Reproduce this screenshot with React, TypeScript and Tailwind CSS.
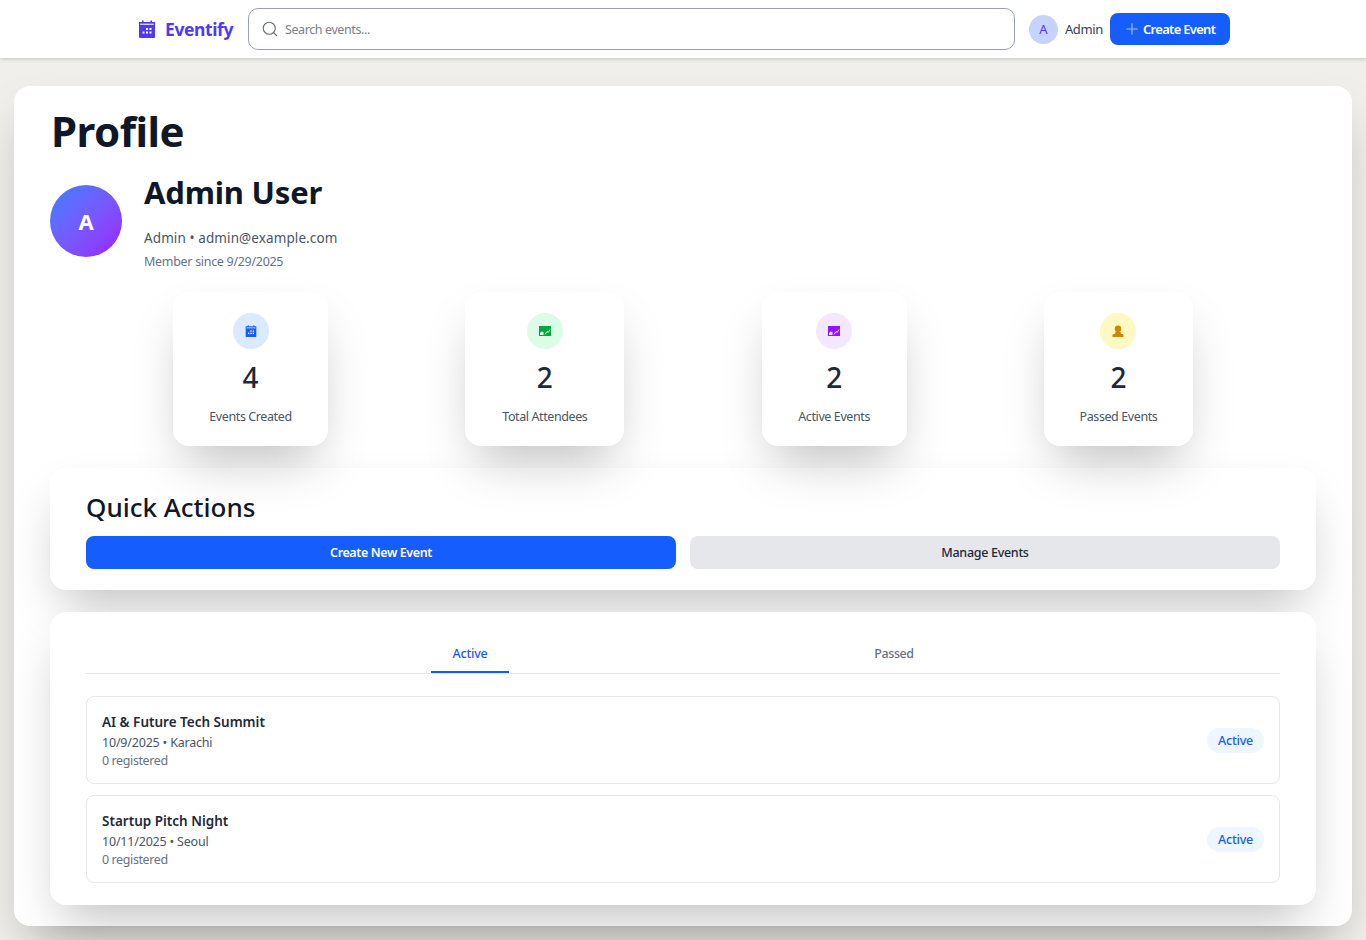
import { Plus, Search } from 'lucide-react';

type IconProps = { className?: string };

function CalendarIcon({ className }: IconProps) {
  return (
    <svg viewBox="0 0 18 18" className={className} fill="currentColor">
      <rect x="4" y="0.5" width="1.6" height="3" />
      <rect x="12.4" y="0.5" width="1.6" height="3" />
      <path d="M1 2h16v15a1 1 0 0 1-1 1H2a1 1 0 0 1-1-1z" />
      <rect x="2.2" y="3.6" width="13.6" height="1.4" fill="#fff" opacity="0.75" />
      <g fill="#fff">
        <rect x="8" y="8" width="2" height="2" />
        <rect x="11.5" y="8" width="2" height="2" />
        <rect x="4.5" y="11.5" width="2" height="2" />
        <rect x="8" y="11.5" width="2" height="2" />
        <rect x="11.5" y="11.5" width="2" height="2" />
      </g>
    </svg>
  );
}

function ChartIcon({ className }: IconProps) {
  return (
    <svg viewBox="0 0 12 10" className={className}>
      <rect width="12" height="10" fill="currentColor" />
      <path d="M1 9V7l1.5-1.5L4.5 6v3z" fill="#fff" opacity="0.9" />
      <path d="M6 8.5l2-3 1.2 1L11 3.5" fill="none" stroke="#fff" strokeWidth="0.8" />
    </svg>
  );
}

function PersonIcon({ className }: IconProps) {
  return (
    <svg viewBox="0 0 12 12" className={className} fill="currentColor">
      <circle cx="6" cy="3.7" r="3.2" />
      <path d="M3.6 6.5h4.8L9 8.8l2.5.7V12H.5V9.5L3 8.8z" />
    </svg>
  );
}

const stats = [
  { value: '4', label: 'Events Created', width: 'w-[155px]', circle: 'bg-[#dbeafe]', color: 'text-[#155dfc]', icon: 'calendar' },
  { value: '2', label: 'Total Attendees', width: 'w-[159px]', circle: 'bg-[#dcfce7]', color: 'text-[#00a63e]', icon: 'chart' },
  { value: '2', label: 'Active Events', width: 'w-[145px]', circle: 'bg-[#f3e8ff]', color: 'text-[#9810fa]', icon: 'chart' },
  { value: '2', label: 'Passed Events', width: 'w-[149px]', circle: 'bg-[#fef9c2]', color: 'text-[#d08700]', icon: 'person' },
];

const events = [
  { title: 'AI & Future Tech Summit', meta: '10/9/2025 • Karachi' },
  { title: 'Startup Pitch Night', meta: '10/11/2025 • Seoul' },
];

export default function App() {
  return (
    <div className="min-h-[940px] bg-[#f0efeb] font-['Noto_Sans','Open_Sans',sans-serif] text-[#101828]">
      <header className="flex h-[58px] items-center bg-white pl-[138px] pr-[136px] shadow-[0_1px_4px_rgba(0,0,0,0.2)]">
        <div className="flex w-[110px] shrink-0 items-center gap-[9px] text-[#4f39f6]">
          <CalendarIcon className="h-[18px] w-[18px]" />
          <span className="text-[17.5px] font-bold tracking-[-0.4px]">Eventify</span>
        </div>
        <div className="flex h-[42px] flex-1 items-center rounded-[10px] border border-[#99a1af] pl-3">
          <Search className="h-[18px] w-[18px] text-[#6a7282]" strokeWidth={1.5} />
          <span className="ml-[6px] pt-[2px] text-[12.5px] tracking-[-0.4px] text-[#7a7f88]">Search events...</span>
        </div>
        <div className="ml-[14px] flex h-[29px] w-[29px] items-center justify-center rounded-full bg-[#c6d2ff] pt-px text-[13px] text-[#4f39f6]">
          A
        </div>
        <span className="ml-[7px] pt-px text-[13px] tracking-[-0.35px] text-[#364153]">Admin</span>
        <button className="ml-[7px] flex h-8 w-[120px] items-center gap-[2px] rounded-lg bg-[#155dfc] pl-[13px] text-[13px] font-semibold tracking-[-0.7px] text-white">
          <Plus className="h-[18px] w-[18px] text-[#a9c4ff]" strokeWidth={1.5} />
          <span className="pt-px">Create Event</span>
        </button>
      </header>

      <main className="px-[14px] pb-[14px] pt-7">
        <div className="h-[840px] rounded-2xl bg-white px-9 shadow-2xl">
          <h1 className="pl-px pt-[15px] text-[42px] font-bold leading-[60px] tracking-[-0.5px]">Profile</h1>

          <div className="mt-[9px] flex items-center gap-[22px]">
            <div className="flex h-[72px] w-[72px] shrink-0 items-center justify-center rounded-full bg-gradient-to-br from-[#2b7fff] to-[#9810fa] pt-px text-[22px] font-bold text-white">
              A
            </div>
            <div>
              <h2 className="text-[31px] font-bold leading-[44px] tracking-[-0.2px]">Admin User</h2>
              <p className="mt-[14px] text-[13.5px] leading-[20px] tracking-[0.1px] text-[#4a5565]">Admin • admin@example.com</p>
              <p className="mt-[5px] text-[12.5px] leading-[18px] tracking-[-0.3px] text-[#6a7282]">Member since 9/29/2025</p>
            </div>
          </div>

          <div className="mt-[21px] flex justify-between px-[123px]">
            {stats.map((s) => (
              <div
                key={s.label}
                className={`flex h-[154px] flex-col items-center rounded-2xl bg-white pt-[21px] shadow-2xl ${s.width}`}
              >
                <div className={`flex h-9 w-9 items-center justify-center rounded-full ${s.circle} ${s.color}`}>
                  {s.icon === 'calendar' && <CalendarIcon className="h-3 w-3" />}
                  {s.icon === 'chart' && <ChartIcon className="h-[10px] w-3" />}
                  {s.icon === 'person' && <PersonIcon className="h-3 w-3" />}
                </div>
                <div className="mt-[10px] text-[28px] font-medium leading-[36px] text-[#1e2939]">{s.value}</div>
                <div className="mt-[12px] whitespace-nowrap text-[12.5px] leading-[20px] tracking-[-0.4px] text-[#4a5565]">
                  {s.label}
                </div>
              </div>
            ))}
          </div>

          <section className="mt-[22px] h-[122px] rounded-2xl bg-white px-9 pt-[19px] shadow-2xl">
            <h3 className="text-[26px] font-medium leading-[40px]">Quick Actions</h3>
            <div className="mt-[9px] grid grid-cols-2 gap-[14px]">
              <button className="h-[33px] rounded-lg bg-[#155dfc] pt-px text-[12.5px] font-semibold tracking-[-0.4px] text-white">
                Create New Event
              </button>
              <button className="h-[33px] rounded-lg bg-[#e5e7eb] pt-px text-[12.5px] font-medium tracking-[-0.3px] text-[#1e2939]">
                Manage Events
              </button>
            </div>
          </section>

          <section className="mt-[22px] h-[293px] rounded-2xl bg-white px-9 pt-[21px] shadow-2xl">
            <div className="flex justify-center gap-[346px] border-b border-[#e5e7eb] pr-[2px]">
              <button className="-mb-px h-10 w-[78px] border-b-2 border-[#155dfc] pt-[4px] text-[12.5px] font-medium tracking-[-0.2px] text-[#155dfc]">
                Active
              </button>
              <button className="h-10 w-[78px] pt-[2px] text-[12.5px] font-medium tracking-[-0.4px] text-[#6a7282]">Passed</button>
            </div>
            <div className="mt-[22px] flex flex-col gap-[11px]">
              {events.map((e) => (
                <div
                  key={e.title}
                  className="flex h-[88px] items-center justify-between rounded-lg border border-[#e5e7eb] pl-[15px] pr-[15px]"
                >
                  <div className="pt-px">
                    <div className="text-[13.5px] font-semibold leading-[20px] text-[#1e2939]">{e.title}</div>
                    <div className="mt-[2px] text-[12.5px] leading-[18px] tracking-[-0.2px] text-[#4a5565]">{e.meta}</div>
                    <div className="text-[12.5px] leading-[18px] tracking-[-0.4px] text-[#6a7282]">0 registered</div>
                  </div>
                  <span className="flex h-[25px] w-[57px] items-center justify-center rounded-full bg-[#eff6ff] pt-[2px] text-[12.5px] font-medium tracking-[-0.2px] text-[#155dfc]">
                    Active
                  </span>
                </div>
              ))}
            </div>
          </section>
        </div>
      </main>
    </div>
  );
}
